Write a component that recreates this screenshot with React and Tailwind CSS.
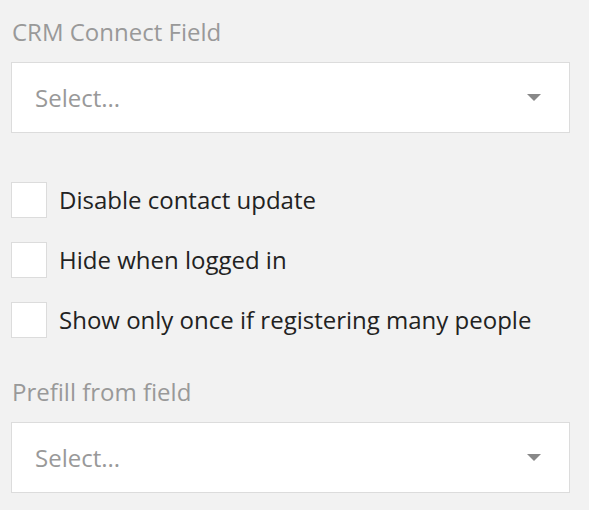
const font = { fontFamily: '"Open Sans", "Noto Sans", sans-serif' }

function Select() {
  return (
    <div className="flex h-[71px] w-[559px] items-center justify-between border border-[#dcdcdc] bg-white pl-[23px] pr-[28px]">
      <span className="text-[24px] leading-[32px] text-[#999]">Select...</span>
      <svg width="14" height="8" viewBox="0 0 14 8">
        <path d="M0 0 H14 L7 7 Z" fill="#888" />
      </svg>
    </div>
  )
}

function Check({ label }) {
  return (
    <label className="flex h-[36px] items-center gap-[12px]">
      <span className="h-[36px] w-[36px] border border-[#dcdcdc] bg-white" />
      <span className="text-[24px] leading-[32px] text-[#222]">{label}</span>
    </label>
  )
}

export default function App() {
  return (
    <div className="min-h-[510px] bg-[#f2f2f2] pl-[11px] pt-[16px]" style={font}>
      <div className="mb-[14px] pl-[1px] text-[24px] leading-[32px] text-[#999]">CRM Connect Field</div>
      <Select />
      <div className="mt-[49px] flex flex-col gap-[24px]">
        <Check label="Disable contact update" />
        <Check label="Hide when logged in" />
        <Check label="Show only once if registering many people" />
      </div>
      <div className="mb-[14px] mt-[38px] pl-[1px] text-[24px] leading-[32px] text-[#999]">Prefill from field</div>
      <Select />
    </div>
  )
}
